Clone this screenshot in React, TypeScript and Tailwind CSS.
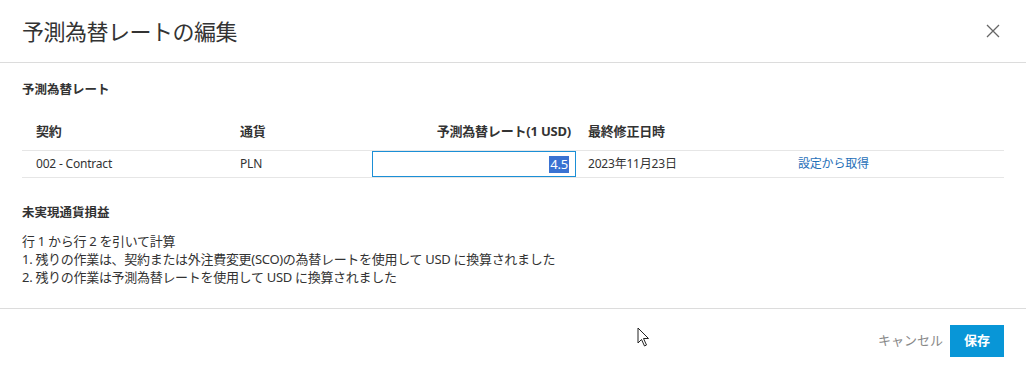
import React from 'react';

const jp = { fontFamily: '"Segoe UI", "Noto Sans", "Noto Sans CJK JP", sans-serif' };

function CloseIcon() {
  return (
    <svg width="14" height="14" viewBox="0 0 14 14" className="text-[#666]">
      <path d="M1 1 L13 13 M13 1 L1 13" stroke="currentColor" strokeWidth="1.3" fill="none" />
    </svg>
  );
}

function Cursor() {
  return (
    <svg width="14" height="20" viewBox="0 0 14 20" className="absolute left-[637px] top-[327px]">
      <path d="M1 1 L1 16 L4.5 12.5 L7.5 19 L9.5 18 L6.5 11.5 L11.5 11.5 Z" fill="#fff" stroke="#222" strokeWidth="1" strokeLinejoin="round" />
    </svg>
  );
}

export default function App() {
  return (
    <div className="relative w-[1026px] h-[371px] bg-white text-[#333] overflow-hidden" style={jp}>
      {/* ヘッダー */}
      <div className="flex items-center justify-between h-[63px] pl-[22px] pr-[26px] border-b border-[#dcdcdc]">
        <h1 className="text-[22px] font-normal text-[#333] tracking-[-0.5px]">予測為替レートの編集</h1>
        <CloseIcon />
      </div>

      {/* 本文 */}
      <div className="px-[22px] pt-[18px] h-[246px] border-b border-[#dcdcdc]">
        <h2 className="text-[12.5px] font-bold leading-[18px]">予測為替レート</h2>

        <div className="mt-[12px] grid grid-cols-[204px_146px_204px_210px_1fr] text-[12px] tracking-[-0.2px]">
          <div className="pl-[14px] h-[40px] flex items-center pt-[2px] font-bold text-[13px] border-b border-[#e6e6e6]">契約</div>
          <div className="pl-[14px] h-[40px] flex items-center pt-[2px] font-bold text-[13px] border-b border-[#e6e6e6]">通貨</div>
          <div className="pr-[5px] h-[40px] flex items-center justify-end pt-[2px] font-bold text-[13px] border-b border-[#e6e6e6]">予測為替レート(1 USD)</div>
          <div className="pl-[12px] h-[40px] flex items-center pt-[2px] font-bold text-[13px] border-b border-[#e6e6e6]">最終修正日時</div>
          <div className="h-[40px] border-b border-[#e6e6e6]" />

          <div className="pl-[14px] h-[27px] flex items-center border-b border-[#e6e6e6]">002 - Contract</div>
          <div className="pl-[14px] h-[27px] flex items-center border-b border-[#e6e6e6]">PLN</div>
          <div className="h-[27px] border-b border-[#e6e6e6]">
            <div className="h-[26px] border border-[#1b8fd6] flex items-center justify-end pr-[6px] text-[13px]">
              <span className="bg-[#3a72d2] text-white px-[1px] leading-[17px]">4.5</span>
            </div>
          </div>
          <div className="pl-[12px] h-[27px] flex items-center border-b border-[#e6e6e6]">2023年11月23日</div>
          <div className="pl-[12px] h-[27px] flex items-center border-b border-[#e6e6e6] text-[#1f6fb8]">設定から取得</div>
        </div>

        <h2 className="mt-[26px] text-[12.5px] font-bold leading-[18px]">未実現通貨損益</h2>
        <div className="mt-[10px] text-[13px] leading-[18px] tracking-[-0.3px]">
          <p>行 1 から行 2 を引いて計算</p>
          <p>1. 残りの作業は、契約または外注費変更(SCO)の為替レートを使用して USD に換算されました</p>
          <p>2. 残りの作業は予測為替レートを使用して USD に換算されました</p>
        </div>
      </div>

      {/* フッター */}
      <div className="flex items-center justify-end gap-[7px] pr-[22px] pt-[16px]">
        <button className="text-[13px] text-[#888]">キャンセル</button>
        <button className="w-[54px] h-[32px] bg-[#0896d7] text-white text-[13px] font-bold">保存</button>
      </div>

      <Cursor />
    </div>
  );
}
